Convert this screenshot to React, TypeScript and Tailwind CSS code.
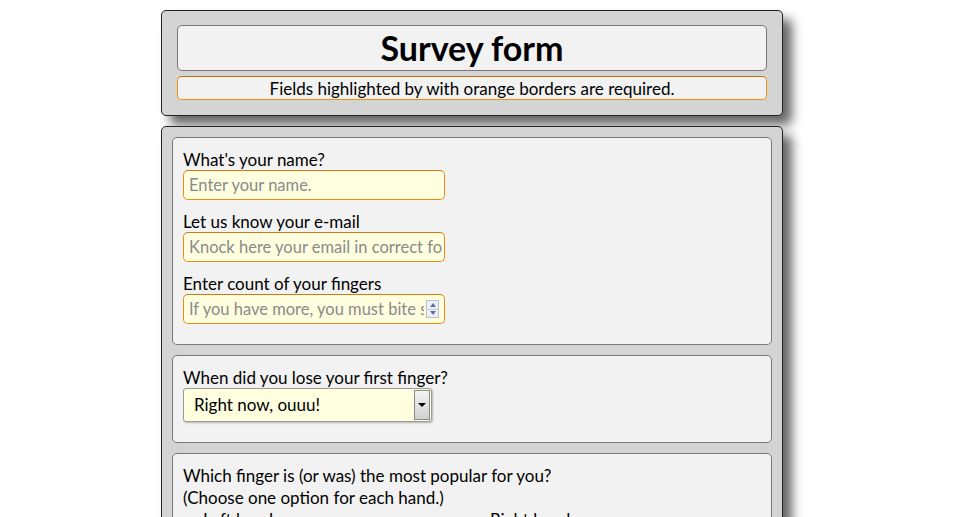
const font = { fontFamily: "Lato, 'Open Sans', sans-serif" };

type FieldProps = {
  label: string;
  placeholder: string;
  spinner?: boolean;
  first?: boolean;
};

const Field = ({ label, placeholder, spinner, first }: FieldProps) => {
  return (
    <div className={first ? "" : "mt-[11px]"}>
      <label className="block pt-px text-[17px] leading-[20px] text-black">{label}</label>
      <div className="relative w-[262px]">
        <input
          type="text"
          placeholder={placeholder}
          className={`block h-[30px] w-full rounded-[5px] border border-[#ef8c10] border-t-[#d07a10] bg-[#ffffe0] pl-[5px] text-[16.5px] text-black placeholder:text-[#8a8a8a] outline-none ${spinner ? "pr-[20px]" : "pr-[2px]"}`}
        />
        {spinner && (
          <div className="pointer-events-none absolute right-[6px] top-[6px] flex h-[18px] w-[13px] flex-col border border-[#b8bfd0] bg-[#eef0f6]">
            <div className="flex flex-1 items-center justify-center border-b border-[#c8ccd8]">
              <span className="block h-0 w-0 border-x-[3px] border-b-[4px] border-x-transparent border-b-[#5a6ea8]" />
            </div>
            <div className="flex flex-1 items-center justify-center">
              <span className="block h-0 w-0 border-x-[3px] border-t-[4px] border-x-transparent border-t-[#5a6ea8]" />
            </div>
          </div>
        )}
      </div>
    </div>
  );
};

const Fieldset = ({ children, className = "" }: { children: React.ReactNode; className?: string }) => (
  <div className={`rounded-[5px] border border-[#777] bg-[#f2f2f2] px-[10px] pt-[11px] pb-[20px] ${className}`}>
    {children}
  </div>
);

const App = () => {
  return (
    <div className="min-h-screen bg-white text-black" style={font}>
      <div className="pr-[14px] pt-[10px]">
        <div className="mx-auto flex w-[622px] flex-col gap-[10px]">
          {/* header */}
          <div className="rounded-[5px] border border-[#222] bg-[#d4d4d4] px-[15px] pt-[14px] pb-[15px] shadow-[9px_9px_11px_rgba(0,0,0,0.6)]">
            <div className="flex h-[46px] items-center justify-center rounded-[5px] border border-[#777] bg-[#f2f2f2]">
              <h1 className="text-[34px] font-bold leading-none">Survey form</h1>
            </div>
            <div className="mt-[5px] flex h-[24px] items-center justify-center rounded-[5px] border border-[#f0900c] border-t-[#c86e0a] bg-[#f2f2f2]">
              <p className="text-[17px] leading-none">Fields highlighted by with orange borders are required.</p>
            </div>
          </div>

          {/* body */}
          <div className="flex h-[420px] flex-col gap-[10px] overflow-hidden rounded-t-[5px] border border-[#222] bg-[#d4d4d4] px-[10px] pt-[10px] shadow-[9px_9px_11px_rgba(0,0,0,0.6)]">
            <Fieldset>
              <Field first label="What's your name?" placeholder="Enter your name." />
              <Field label="Let us know your e-mail" placeholder="Knock here your email in correct format" />
              <Field spinner label="Enter count of your fingers" placeholder="If you have more, you must bite some off" />
            </Fieldset>

            <Fieldset>
              <label className="block pt-px text-[17px] leading-[20px]">When did you lose your first finger?</label>
              <div className="relative h-[34px] w-[249px] rounded-[3px] border border-[#9a9a9a] bg-[#ffffe0] shadow-[1px_1px_2px_rgba(0,0,0,0.25)]">
                <select className="h-full w-full appearance-none bg-transparent pl-[10px] text-[17px] text-black outline-none">
                  <option>Right now, ouuu!</option>
                </select>
                <div className="pointer-events-none absolute right-[1px] top-[1px] bottom-[1px] flex w-[16px] items-center justify-center border border-[#8a8a8a] bg-gradient-to-b from-[#f4f4f4] to-[#d0d0d0]">
                  <span className="block h-0 w-0 border-x-[4px] border-t-[4px] border-x-transparent border-t-black" />
                </div>
              </div>
            </Fieldset>

            <Fieldset className="flex-1 pb-0">
              <p className="text-[17px] leading-[22px]">Which finger is (or was) the most popular for you?</p>
              <p className="text-[17px] leading-[22px]">(Choose one option for each hand.)</p>
              <div className="grid grid-cols-2 text-[17px] leading-[22px]">
                <span className="pl-[20px]">Left hand</span>
                <span className="pl-[18px]">Right hand</span>
              </div>
            </Fieldset>
          </div>
        </div>
      </div>
    </div>
  );
};

export default App;
